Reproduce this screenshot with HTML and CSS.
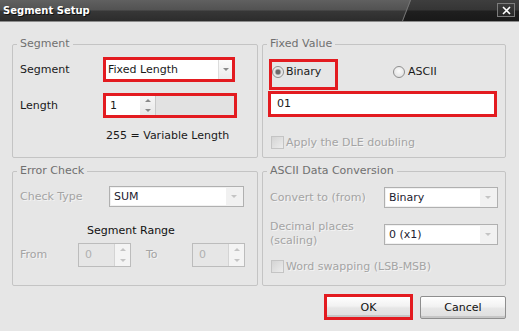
FILE: index.html
```html
<!DOCTYPE html>
<html lang="en">
<head>
  <meta charset="UTF-8" />
  <title>Segment Setup</title>
  <link rel="stylesheet" href="styles.css">
</head>
<body>
  <div class="dialog">
    <div class="titlebar">
      <span class="title">Segment Setup</span>
      <span class="close">
        <svg width="9" height="9" viewBox="0 0 9 9"><path d="M1 1L8 8M8 1L1 8" stroke="#fff" stroke-width="1.6"/></svg>
      </span>
    </div>

    <div class="content">
      <div class="groups">
        <!-- Segment -->
        <fieldset class="group">
          <legend>Segment</legend>
          <div class="row r-seg">
            <span class="lbl w83">Segment</span>
            <div class="mark seg-mark">
              <div class="combo">
                <span class="val">Fixed Length</span>
                <span class="drop"><i class="tri-down"></i></span>
              </div>
            </div>
          </div>
          <div class="row r-len">
            <span class="lbl w83">Length</span>
            <div class="mark len-mark">
              <div class="spin">
                <span class="val">1</span>
                <span class="spin-btns"><i class="tri-up"></i><i class="tri-down"></i></span>
              </div>
            </div>
          </div>
          <div class="note">255 = Variable Length</div>
        </fieldset>

        <!-- Fixed Value -->
        <fieldset class="group">
          <legend>Fixed Value</legend>
          <div class="radios">
            <div class="mark bin-mark">
              <span class="radio"><i class="dot on"></i>Binary</span>
            </div>
            <span class="radio ascii"><i class="dot"></i>ASCII</span>
          </div>
          <div class="mark val-mark">
            <div class="field">01</div>
          </div>
          <div class="check dle"><i class="box"></i>Apply the DLE doubling</div>
        </fieldset>

        <!-- Error Check -->
        <fieldset class="group">
          <legend>Error Check</legend>
          <div class="row r-type">
            <span class="lbl dis w89">Check Type</span>
            <div class="combo dis w135">
              <span class="val">SUM</span>
              <span class="drop"><i class="tri-down"></i></span>
            </div>
          </div>
          <div class="range-title">Segment Range</div>
          <div class="row r-range">
            <span class="lbl dis w58">From</span>
            <div class="spin dis">
              <span class="val">0</span>
              <span class="spin-btns"><i class="tri-up"></i><i class="tri-down"></i></span>
            </div>
            <span class="lbl dis to">To</span>
            <div class="spin dis">
              <span class="val">0</span>
              <span class="spin-btns"><i class="tri-up"></i><i class="tri-down"></i></span>
            </div>
          </div>
        </fieldset>

        <!-- ASCII Data Conversion -->
        <fieldset class="group">
          <legend>ASCII Data Conversion</legend>
          <div class="row r-conv">
            <span class="lbl dis w114">Convert to (from)</span>
            <div class="combo dis w114">
              <span class="val">Binary</span>
              <span class="drop"><i class="tri-down"></i></span>
            </div>
          </div>
          <div class="row r-dec">
            <span class="lbl dis w114 two">Decimal places<br>(scaling)</span>
            <div class="combo dis w114">
              <span class="val">0 (x1)</span>
              <span class="drop"><i class="tri-down"></i></span>
            </div>
          </div>
          <div class="check swap"><i class="box"></i>Word swapping (LSB-MSB)</div>
        </fieldset>
      </div>

      <div class="buttons">
        <button class="btn ok">OK</button>
        <button class="btn cancel">Cancel</button>
      </div>
    </div>
  </div>
</body>
</html>
```

FILE: styles.css
```css
* {
  box-sizing: border-box;
}

body {
  margin: 0;
  background-color: #e6e6e6;
  font-family: "DejaVu Sans", sans-serif;
  font-size: 11px;
  color: #1a1a1a;
}

.dialog {
  width: 519px;
  height: 331px;
  overflow: hidden;
}

/* title bar */
.titlebar {
  position: relative;
  display: flex;
  align-items: center;
  justify-content: space-between;
  height: 22px;
  padding: 0 4px 1px 3px;
  border-bottom: 1px solid #8c8c8c;
  background: linear-gradient(#606060, #525252 48%, #373737 52%, #2c2c2c);
  overflow: hidden;
}

.titlebar::after {
  content: "";
  position: absolute;
  top: 0;
  bottom: 0;
  left: 406px;
  right: -20px;
  background: linear-gradient(#3e3e3e, #353535 48%, #1f1f1f 52%, #191919);
  border-left: 1px solid #767676;
  transform: skewX(-21deg);
}

.title {
  position: relative;
  z-index: 1;
  font-weight: bold;
  font-size: 10px;
  color: #fff;
  text-shadow: 1px 1px 0 #111;
}

.close {
  position: relative;
  z-index: 1;
  display: flex;
  align-items: center;
  justify-content: center;
  width: 18px;
  height: 14px;
  border: 1px solid #7c7c7c;
  background: linear-gradient(#3c3c3c, #262626);
}

/* body */
.content {
  padding: 15px 13px 0 12px;
}

.groups {
  display: grid;
  grid-template-columns: 246px 244px;
  grid-template-rows: 121px 122px;
  column-gap: 4px;
  row-gap: 6px;
}

.group {
  margin: 0;
  padding: 0 0 0 7px;
  min-width: 0;
  border: 1px solid #c4c4c4;
  border-radius: 2px;
}

.group legend {
  padding: 0 3px;
  margin-left: -3px;
  line-height: 14px;
  color: #707070;
}

.row {
  display: flex;
  align-items: center;
}

.lbl {
  flex: none;
  line-height: 14px;
}

.lbl.dis,
.check {
  color: #a4a4a4;
  text-shadow: 1px 1px 0 #f4f4f4;
}

.w83 { width: 83px; }
.w89 { width: 89px; }
.w58 { width: 58px; }
.w114 { width: 114px; }
.w135 { width: 135px; }

/* red highlight boxes */
.mark {
  border: 3px solid #e31b20;
}

.seg-mark {
  width: 132px;
  height: 25px;
}

.len-mark {
  width: 134px;
  height: 25px;
  background-color: #e2e2e2;
}

.r-seg { margin-top: 6px; }
.r-len { margin-top: 11px; }

.note {
  margin: 11px 0 0 86px;
  line-height: 14px;
}

/* combo box */
.combo {
  display: flex;
  height: 100%;
  background-color: #fff;
}

.combo .val {
  flex: 1;
  padding-left: 2px;
  line-height: 19px;
  white-space: nowrap;
}

.combo .drop {
  display: flex;
  align-items: center;
  justify-content: center;
  width: 14px;
  border-left: 1px solid #dcdcdc;
  background: linear-gradient(#fbfbfb, #ebebeb);
}

.combo.dis {
  height: 21px;
  padding: 1px;
  border: 1px solid #b0b0b0;
  background-color: #f1f1f1;
}

.combo.dis .val {
  padding-left: 3px;
  background-color: #fff;
  line-height: 17px;
  color: #1c1c30;
}

.combo.dis .drop {
  width: 16px;
  border-left: none;
  background: #f1f1f1;
}

.combo.dis .tri-down {
  border-top-color: #c4c4c4;
}

.tri-down,
.tri-up {
  display: block;
  width: 0;
  height: 0;
  border-left: 3px solid transparent;
  border-right: 3px solid transparent;
}

.tri-down {
  border-top: 3px solid #8a8a8a;
}

.tri-up {
  border-bottom: 3px solid #8a8a8a;
}

/* spin box */
.spin {
  display: flex;
  width: 50px;
  height: 100%;
  border-right: 1px solid #c8c8c8;
}

.spin .val {
  width: 34px;
  padding-left: 4px;
  line-height: 19px;
  background-color: #fff;
}

.spin-btns {
  display: flex;
  flex-direction: column;
  width: 15px;
  background: linear-gradient(#f6f6f6, #e8e8e8);
}

.spin-btns .tri-up,
.spin-btns .tri-down {
  margin: auto;
}

.spin-btns .tri-up {
  padding-bottom: 0;
}

.spin.dis {
  width: 53px;
  height: 24px;
  border: 1px solid #bcbcbc;
}

.spin.dis .val {
  flex: 1;
  width: auto;
  padding-left: 6px;
  line-height: 22px;
  background: none;
  color: #b0b0b0;
}

.spin.dis .spin-btns {
  width: 16px;
  border-left: 1px solid #d4d4d4;
  background: linear-gradient(#f4f4f4 0 48%, #dadada 48% 52%, #f4f4f4 52%);
}

.spin.dis .tri-up { border-bottom-color: #c4c4c4; }
.spin.dis .tri-down { border-top-color: #c4c4c4; }

/* fixed value */
.radios {
  display: flex;
  align-items: flex-start;
  margin-top: 8px;
}

.bin-mark {
  width: 69px;
  height: 31px;
  margin-left: -1px;
}

.radio {
  display: flex;
  align-items: center;
  height: 20px;
  line-height: 14px;
}

.radio.ascii {
  margin: 3px 0 0 55px;
}

.dot {
  width: 12px;
  height: 12px;
  margin-right: 2px;
  border: 1px solid #8e8e8e;
  border-radius: 50%;
  background: radial-gradient(circle at 50% 40%, #fbfbfb, #dcdcdc);
}

.ascii .dot {
  margin-right: 3px;
}

.dot.on {
  background: radial-gradient(circle, #6a6a6a 0 2px, #a8a8a8 2.6px, #e4e4e4 3.6px, #f6f6f6);
}

.val-mark {
  width: 229px;
  height: 26px;
  margin: 1px 0 0 -2px;
}

.field {
  height: 100%;
  padding-left: 6px;
  line-height: 20px;
  background-color: #fff;
}

.check {
  display: flex;
  align-items: center;
  height: 14px;
  margin-left: 1px;
}

.check .box {
  width: 13px;
  height: 13px;
  margin-right: 2px;
  border: 1px solid #c4c4c4;
  background: linear-gradient(135deg, #d4d4d4, #ececec);
}

.dle { margin-top: 18px; }

/* error check */
.r-type { margin-top: 8px; }

.range-title {
  margin: 17px 0 0 67px;
  line-height: 14px;
  color: #111;
}

.r-range { margin-top: 5px; }

.to {
  width: 46px;
  margin-left: 15px;
}

/* ascii conversion */
.r-conv { margin-top: 9px; }
.r-dec { margin-top: 12px; }
.swap { margin-top: 11px; }

/* buttons */
.buttons {
  display: flex;
  justify-content: flex-end;
  align-items: center;
  gap: 7px;
  margin-top: 8px;
}

.btn {
  font-family: "DejaVu Sans", sans-serif;
  font-size: 11px;
  color: #111;
  padding: 0;
  border: 1px solid #8e8e8e;
  border-radius: 2px;
  background: linear-gradient(#fefefe, #f2f2f2 45%, #e6e6e6 55%, #dedede);
  box-shadow: inset 0 -2px 0 #c6c6c6, inset 0 1px 0 #fff;
}

.ok {
  width: 89px;
  height: 26px;
  border: 3px solid #e31b20;
  border-radius: 0;
}

.cancel {
  width: 86px;
  height: 23px;
}
```
